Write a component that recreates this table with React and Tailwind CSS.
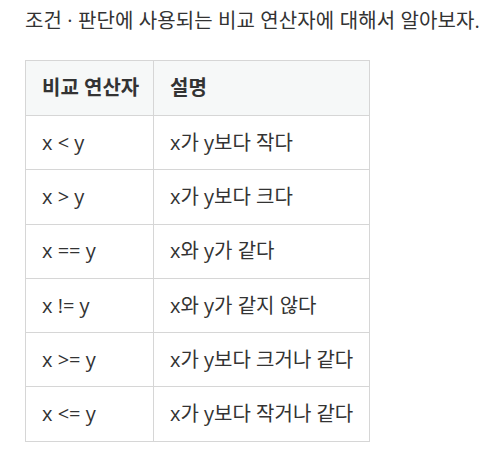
export default function App() {
  const rows = [
    ["x < y", "x가 y보다 작다"],
    ["x > y", "x가 y보다 크다"],
    ["x == y", "x와 y가 같다"],
    ["x != y", "x와 y가 같지 않다"],
    ["x >= y", "x가 y보다 크거나 같다"],
    ["x <= y", "x가 y보다 작거나 같다"],
  ];
  return (
    <div className="bg-white text-[#333] pl-[25px] pt-[6px] text-[20px]" style={{ fontFamily: '"Open Sans", "Noto Sans CJK KR", sans-serif' }}>
      <p className="leading-[30px] whitespace-nowrap tracking-[0.1px]">조건 · 판단에 사용되는 비교 연산자에 대해서 알아보자.</p>
      <table className="mt-[24px] border-collapse border border-[#d6d6d6] table-fixed w-[344px]">
        <colgroup>
          <col className="w-[128px]" />
          <col className="w-[216px]" />
        </colgroup>
        <thead>
          <tr className="bg-[#f6f8f8] h-[55px]">
            <th className="border border-[#d6d6d6] text-left font-bold pl-[16px] pr-0 whitespace-nowrap leading-[28px]">비교 연산자</th>
            <th className="border border-[#d6d6d6] text-left font-bold pl-[16px] pr-0 whitespace-nowrap leading-[28px]">설명</th>
          </tr>
        </thead>
        <tbody>
          {rows.map(([a, b]) => (
            <tr key={a} className="h-[54.3px]">
              <td className="border border-[#d6d6d6] pl-[16px] pr-0 whitespace-nowrap leading-[28px]">{a}</td>
              <td className="border border-[#d6d6d6] pl-[16px] pr-0 whitespace-nowrap leading-[28px]">{b}</td>
            </tr>
          ))}
        </tbody>
      </table>
    </div>
  );
}
